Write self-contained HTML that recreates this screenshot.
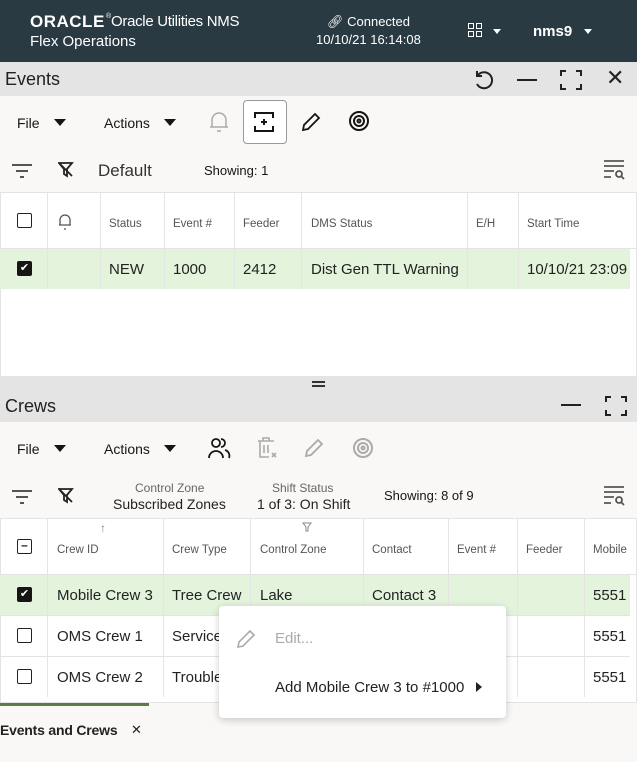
<!DOCTYPE html>
<html><head><meta charset="utf-8"><style>
*{box-sizing:border-box;margin:0;padding:0}
body{width:637px;height:762px;overflow:hidden;font-family:"Liberation Sans",sans-serif;background:#f9f8f6;position:relative;color:#161513}
.a{position:absolute}
.hdr{left:0;top:0;width:637px;height:62px;background:#2a3a42;color:#fff}
.bar{left:0;width:637px;background:#e4e4e4;font-size:18px;color:#222}
.tb{font-size:14px}
.cb{width:15px;height:15px;border:1.5px solid #222;border-radius:2px;background:#fff}
.cbk{width:15px;height:15px;background:#161513;border-radius:2px;color:#fff;font-size:11px;text-align:center;line-height:15px}
.th{font-size:11.5px;color:#555}
.td{font-size:15px;color:#222}
.vl{width:1px;background:#e5e5e5}
.tri{width:0;height:0;border-left:6px solid transparent;border-right:6px solid transparent;border-top:7px solid #161513}
</style></head><body>
<div class="a hdr">
 <div class="a" style="left:30px;top:12px;font-size:17px;font-weight:bold;letter-spacing:0.5px;transform:scaleX(1.0)">ORACLE</div>
 <div class="a" style="left:106px;top:13px;font-size:7px">®</div>
 <div class="a" style="left:111px;top:13px;font-size:15px;letter-spacing:-0.3px">Oracle Utilities NMS</div>
 <div class="a" style="left:30px;top:33px;font-size:15px">Flex Operations</div>
 <div class="a" style="left:327px;top:14px;font-size:13px">&#128279;&#xFE0E; Connected</div>
 <div class="a" style="left:316px;top:32px;font-size:13px">10/10/21 16:14:08</div>
 <div class="a" style="left:468px;top:23px;width:14px;height:14px;display:grid;grid-template-columns:6px 6px;gap:2px"><i style="border:1.5px solid #fff"></i><i style="border:1.5px solid #fff"></i><i style="border:1.5px solid #fff"></i><i style="border:1.5px solid #fff"></i></div>
 <div class="a" style="left:493px;top:29px;border-left:4px solid transparent;border-right:4px solid transparent;border-top:5px solid #fff"></div>
 <div class="a" style="left:533px;top:23px;font-size:15px;font-weight:bold">nms9</div>
 <div class="a" style="left:584px;top:29px;border-left:4px solid transparent;border-right:4px solid transparent;border-top:5px solid #fff"></div>
</div>
<div class="a bar" style="top:62px;height:34px"><span class="a" style="left:5px;top:7px">Events</span>
 <svg class="a" style="left:473px;top:7px" width="22" height="22" fill="none" stroke="#222" stroke-width="2"><path d="M5 6a8 8 0 11-1 9"/><path d="M4 2v5h5"/></svg>
 <span class="a" style="left:517px;top:17px;width:20px;height:2px;background:#222"></span>
 <svg class="a" style="left:560px;top:8px" width="22" height="20" fill="none" stroke="#222" stroke-width="2"><path d="M1 6V1h5M16 1h5v5M21 14v5h-5M6 19H1v-5"/></svg>
 <span class="a" style="left:606px;top:3px;font-size:22px">&#x2715;</span></div>
<div class="a tb" style="left:17px;top:115px">File</div><div class="a tri" style="left:54px;top:119px"></div>
<div class="a tb" style="left:104px;top:115px">Actions</div><div class="a tri" style="left:164px;top:119px"></div>
<svg class="a" style="left:208px;top:110px" width="22" height="24" fill="none" stroke="#aaa" stroke-width="1.5"><path d="M4 17V10a7 7 0 0114 0v7h2H2zM9 21h4"/></svg>
<div class="a" style="left:243px;top:100px;width:44px;height:44px;border:1px solid #999;border-radius:4px;background:#fff"></div>
<svg class="a" style="left:253px;top:111px" width="22" height="22" fill="none" stroke="#161513" stroke-width="2"><path d="M2 7V2h18v5M2 15v5h18v-5M8 11h6M11 8v6"/></svg>
<svg class="a" style="left:300px;top:111px" width="22" height="22" fill="none" stroke="#161513" stroke-width="1.8"><path d="M3 19l1-5L15 3l4 4L8 18z"/></svg>
<svg class="a" style="left:348px;top:110px" width="22" height="22" fill="none" stroke="#161513" stroke-width="2"><circle cx="11" cy="11" r="9"/><circle cx="11" cy="11" r="5"/><circle cx="11" cy="11" r="1.5"/></svg>
<svg class="a" style="left:12px;top:163px" width="20" height="16" stroke="#555" stroke-width="2"><path d="M0 2h20M4 8h12M8 14h4"/></svg>
<svg class="a" style="left:58px;top:162px" width="16" height="16" fill="none" stroke="#222" stroke-width="1.8"><path d="M1 1h13L9 7v7L6 12V7zM2 2l12 12"/></svg>
<div class="a" style="left:98px;top:161px;font-size:17px;color:#333">Default</div>
<div class="a" style="left:204px;top:163px;font-size:13px">Showing: 1</div>
<svg class="a" style="left:604px;top:160px" width="22" height="20" stroke="#555" stroke-width="1.8" fill="none"><path d="M0 1h20M0 6h20M0 11h10M0 17h7"/><circle cx="15" cy="14" r="3"/><path d="M17 16l3 3"/></svg>
<div class="a" style="left:0;top:192px;width:637px;height:185px;background:#fff;border:1px solid #e3e3e3"></div>
<div class="a" style="left:0;top:248px;width:630px;height:41px;background:#e3f3dc"></div>
<div class="a" style="left:0;top:248px;width:637px;height:1px;background:#e3e3e3"></div>
<div class="a vl" style="left:47px;top:193px;height:96px"></div><div class="a vl" style="left:100px;top:193px;height:96px"></div><div class="a vl" style="left:164px;top:193px;height:96px"></div><div class="a vl" style="left:234px;top:193px;height:96px"></div><div class="a vl" style="left:301px;top:193px;height:96px"></div><div class="a vl" style="left:467px;top:193px;height:96px"></div><div class="a vl" style="left:518px;top:193px;height:96px"></div>
<div class="a cb" style="left:17px;top:213px"></div>
<svg class="a" style="left:57px;top:213px" width="16" height="18" fill="none" stroke="#555" stroke-width="1.3"><path d="M3 12V7a5 5 0 0110 0v5h1H2zM7 16h2"/></svg>
<div class="a th" style="left:109px;top:218px">Status</div><div class="a th" style="left:173px;top:218px">Event #</div><div class="a th" style="left:243px;top:218px">Feeder</div><div class="a th" style="left:311px;top:218px">DMS Status</div><div class="a th" style="left:476px;top:218px">E/H</div><div class="a th" style="left:527px;top:218px">Start Time</div>
<div class="a cbk" style="left:17px;top:261px">&#10004;</div>
<div class="a td" style="left:109px;top:261px">NEW</div><div class="a td" style="left:173px;top:261px">1000</div><div class="a td" style="left:243px;top:261px">2412</div><div class="a td" style="left:311px;top:261px">Dist Gen TTL Warning</div><div class="a td" style="left:527px;top:261px">10/10/21 23:09</div>
<div class="a" style="left:0;top:377px;width:637px;height:13px;background:#e4e4e4"></div>
<div class="a" style="left:312px;top:381px;width:13px;height:1.5px;background:#333"></div><div class="a" style="left:312px;top:385px;width:13px;height:1.5px;background:#333"></div>
<div class="a bar" style="top:390px;height:32px"><span class="a" style="left:5px;top:6px">Crews</span>
 <span class="a" style="left:561px;top:14px;width:20px;height:2px;background:#222"></span>
 <svg class="a" style="left:605px;top:6px" width="22" height="20" fill="none" stroke="#222" stroke-width="2"><path d="M1 6V1h5M16 1h5v5M21 14v5h-5M6 19H1v-5"/></svg></div>
<div class="a tb" style="left:17px;top:441px">File</div><div class="a tri" style="left:54px;top:445px"></div>
<div class="a tb" style="left:104px;top:441px">Actions</div><div class="a tri" style="left:164px;top:445px"></div>
<svg class="a" style="left:207px;top:437px" width="24" height="22" fill="none" stroke="#161513" stroke-width="1.8"><circle cx="9" cy="6" r="4"/><path d="M2 21a7 7 0 0114 0M14 2a4 4 0 010 8M18 13a6 6 0 014 8"/></svg>
<svg class="a" style="left:256px;top:437px" width="22" height="22" fill="none" stroke="#aaa" stroke-width="1.6"><path d="M2 4h16M7 4V1h6v3M4 4v16h9M8 8v8M12 8v8M16 16l4 4M20 16l-4 4"/></svg>
<svg class="a" style="left:303px;top:437px" width="22" height="22" fill="none" stroke="#aaa" stroke-width="1.8"><path d="M3 19l1-5L15 3l4 4L8 18z"/></svg>
<svg class="a" style="left:352px;top:437px" width="22" height="22" fill="none" stroke="#aaa" stroke-width="2"><circle cx="11" cy="11" r="9"/><circle cx="11" cy="11" r="5"/><circle cx="11" cy="11" r="1.5"/></svg>
<svg class="a" style="left:12px;top:489px" width="20" height="16" stroke="#555" stroke-width="2"><path d="M0 2h20M4 8h12M8 14h4"/></svg>
<svg class="a" style="left:58px;top:488px" width="16" height="16" fill="none" stroke="#222" stroke-width="1.8"><path d="M1 1h13L9 7v7L6 12V7zM2 2l12 12"/></svg>
<div class="a" style="left:135px;top:481px;font-size:12px;color:#666">Control Zone</div>
<div class="a" style="left:113px;top:496px;font-size:14px;color:#222">Subscribed Zones</div>
<div class="a" style="left:272px;top:481px;font-size:12px;color:#666">Shift Status</div>
<div class="a" style="left:257px;top:496px;font-size:14px;color:#222">1 of 3: On Shift</div>
<div class="a" style="left:384px;top:488px;font-size:13px">Showing: 8 of 9</div>
<svg class="a" style="left:604px;top:486px" width="22" height="20" stroke="#555" stroke-width="1.8" fill="none"><path d="M0 1h20M0 6h20M0 11h10M0 17h7"/><circle cx="15" cy="14" r="3"/><path d="M17 16l3 3"/></svg>
<div class="a" style="left:0;top:518px;width:637px;height:185px;background:#fff;border:1px solid #e3e3e3"></div>
<div class="a" style="left:0;top:574px;width:630px;height:41px;background:#e3f3dc"></div>
<div class="a" style="left:0;top:574px;width:637px;height:1px;background:#e3e3e3"></div>
<div class="a" style="left:0;top:615px;width:630px;height:1px;background:#e3e3e3"></div>
<div class="a" style="left:0;top:656px;width:630px;height:1px;background:#e3e3e3"></div>
<div class="a vl" style="left:47px;top:519px;height:178px"></div><div class="a vl" style="left:163px;top:519px;height:178px"></div><div class="a vl" style="left:250px;top:519px;height:178px"></div><div class="a vl" style="left:363px;top:519px;height:178px"></div><div class="a vl" style="left:448px;top:519px;height:178px"></div><div class="a vl" style="left:517px;top:519px;height:178px"></div><div class="a vl" style="left:584px;top:519px;height:178px"></div>
<div class="a cb" style="left:17px;top:539px;font-size:12px;line-height:10px;text-align:center;font-weight:bold">&#8211;</div>
<div class="a" style="left:100px;top:521px;font-size:12px;color:#888">&#8593;</div>
<svg class="a" style="left:302px;top:522px" width="10" height="10" fill="none" stroke="#888"><path d="M1 1h8L6 5v4H4V5z"/></svg>
<div class="a th" style="left:57px;top:544px">Crew ID</div><div class="a th" style="left:172px;top:544px">Crew Type</div><div class="a th" style="left:260px;top:544px">Control Zone</div><div class="a th" style="left:372px;top:544px">Contact</div><div class="a th" style="left:457px;top:544px">Event #</div><div class="a th" style="left:526px;top:544px">Feeder</div><div class="a th" style="left:593px;top:544px">Mobile</div>
<div class="a cbk" style="left:17px;top:587px">&#10004;</div>
<div class="a td" style="left:57px;top:587px">Mobile Crew 3</div><div class="a td" style="left:172px;top:587px">Tree Crew</div><div class="a td" style="left:260px;top:587px">Lake</div><div class="a td" style="left:372px;top:587px">Contact 3</div><div class="a td" style="left:593px;top:587px">5551</div>
<div class="a cb" style="left:17px;top:628px"></div>
<div class="a td" style="left:57px;top:628px">OMS Crew 1</div><div class="a td" style="left:172px;top:628px">Service</div><div class="a td" style="left:593px;top:628px">5551</div>
<div class="a cb" style="left:17px;top:669px"></div>
<div class="a td" style="left:57px;top:669px">OMS Crew 2</div><div class="a td" style="left:172px;top:669px">Trouble</div><div class="a td" style="left:593px;top:669px">5551</div>
<div class="a" style="left:0;top:703px;width:149px;height:3px;background:#5e7a46"></div>
<div class="a" style="left:0;top:722px;font-size:14px;font-weight:bold;color:#222;letter-spacing:-0.2px">Events and Crews</div>
<div class="a" style="left:131px;top:722px;font-size:13px;color:#222">&#x2715;</div>
<div class="a" style="left:219px;top:606px;width:287px;height:112px;background:#fff;border-radius:4px;box-shadow:0 2px 8px rgba(0,0,0,.2)">
 <svg class="a" style="left:16px;top:22px" width="22" height="22" fill="none" stroke="#aaa" stroke-width="1.6"><path d="M3 19l1-5L15 3l4 4L8 18z"/></svg>
 <div class="a" style="left:56px;top:24px;font-size:15px;color:#aaa">Edit...</div>
 <div class="a" style="left:56px;top:73px;font-size:15px;color:#222">Add Mobile Crew 3 to #1000</div>
 <div class="a" style="left:257px;top:76px;border-top:5px solid transparent;border-bottom:5px solid transparent;border-left:6px solid #222"></div>
</div>
</body></html>
